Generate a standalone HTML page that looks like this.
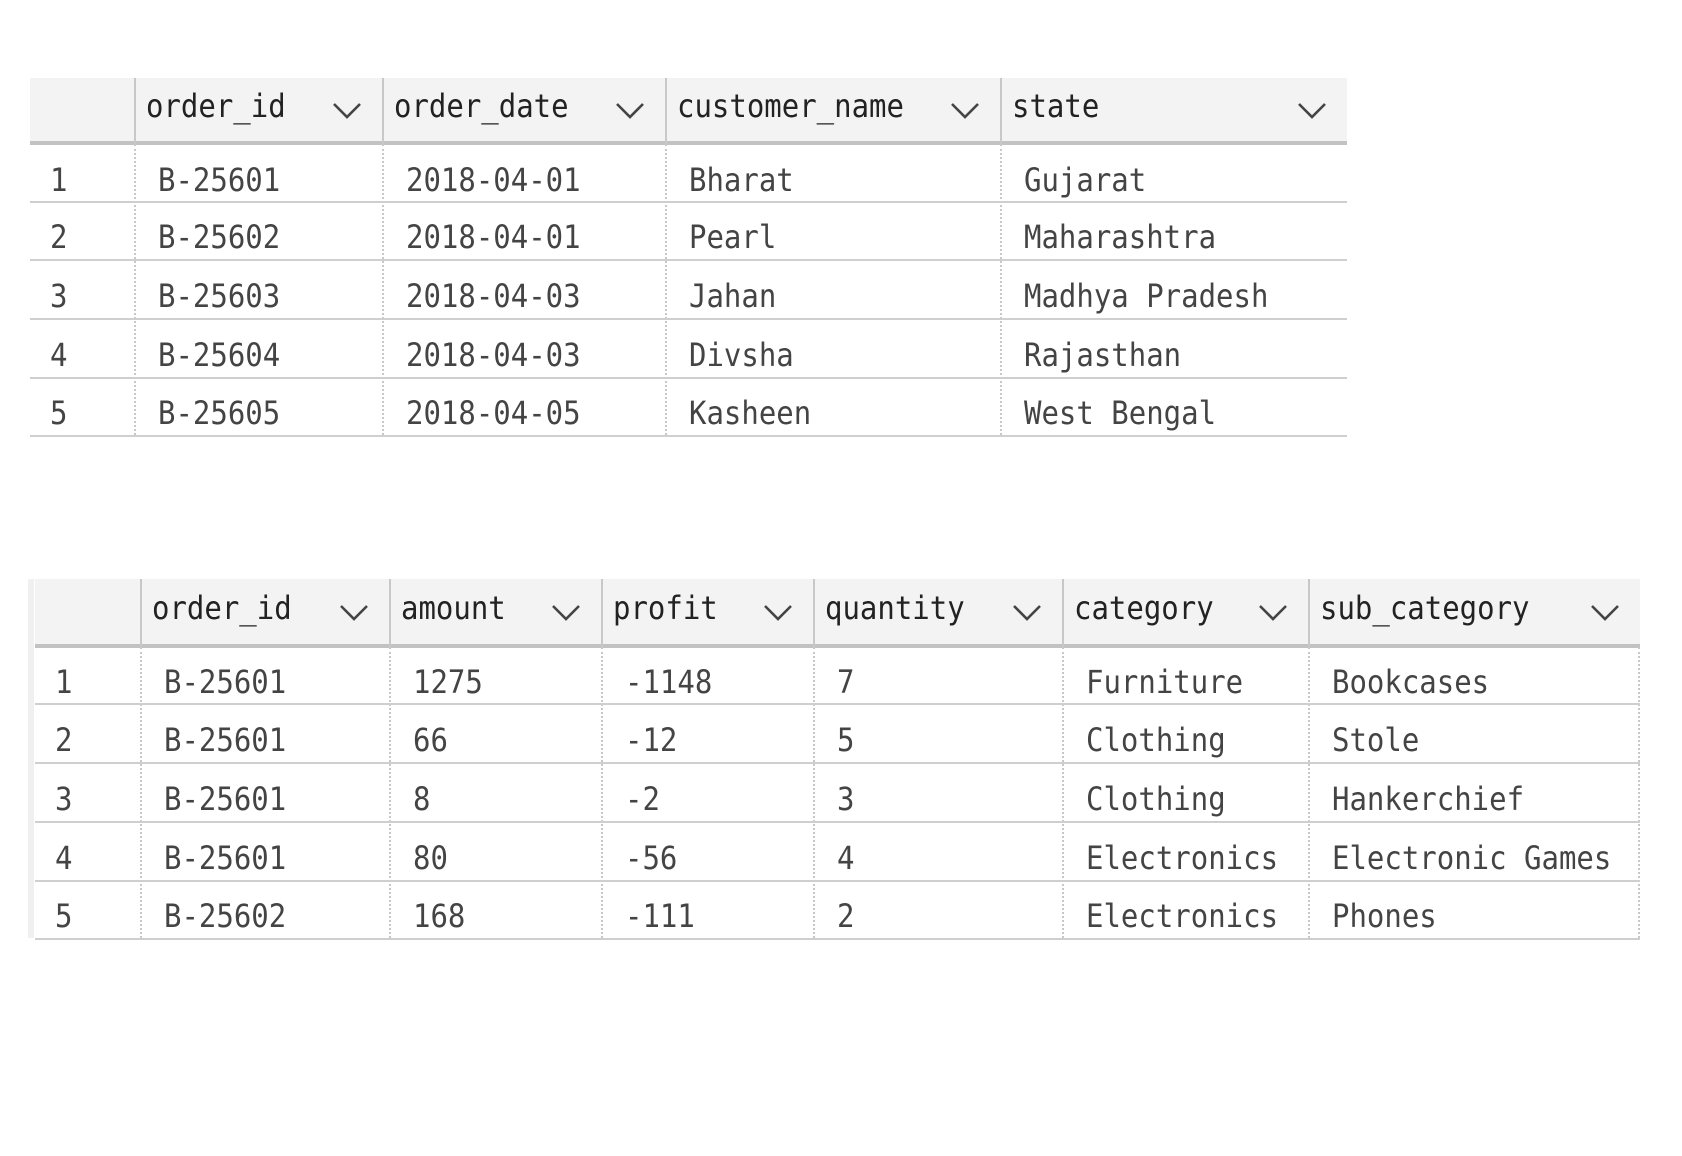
<!DOCTYPE html>
<html><head><meta charset="utf-8"><style>
*{margin:0;padding:0;box-sizing:border-box}
body{width:1682px;height:1156px;background:#fff;position:relative;overflow:hidden;font-family:"DejaVu Sans Mono","Liberation Mono",monospace;font-size:29px;color:#444}
.a{position:absolute}
.hd{background:#f3f3f4}
.hl{background:#c2c2c2}
.rl{background:#cfcfcf;height:2px}
.vd{border-left:2px dotted #c8c8c8;width:0}
.vs{background:#c8c8c8;width:2px}
.t{position:absolute;white-space:pre;line-height:1;transform:scaleY(1.1);transform-origin:0 50%}
.h{color:#222}
svg{position:absolute}
</style></head><body>
<script>
function build(o){
 var r=document.body, h='';
 var L=o.left,R=o.right,T=o.top,HB=o.hb,rows=o.rows,cols=o.cols;
 h+='<div class="a hd" style="left:'+o.hl+'px;top:'+T+'px;width:'+(R-o.hl)+'px;height:'+(HB-T)+'px"></div>';
 h+='<div class="a hl" style="left:'+o.hl+'px;top:'+(HB-3)+'px;width:'+(R-o.hl)+'px;height:4px"></div>';
 if(o.strip)h+='<div class="a" style="left:'+L+'px;top:'+T+'px;width:6px;height:'+(rows[rows.length-1]-T)+'px;background:#f0f0f0"></div>';
 for(var i=0;i<cols.length;i++){
  var x=cols[i];
  h+='<div class="a vs" style="left:'+x+'px;top:'+T+'px;height:'+(HB-T)+'px"></div>';
  h+='<div class="a vd" style="left:'+x+'px;top:'+HB+'px;height:'+(rows[rows.length-1]-HB)+'px"></div>';
 }
 if(o.rightDot)h+='<div class="a vd" style="left:'+(R-2)+'px;top:'+HB+'px;height:'+(rows[rows.length-1]-HB)+'px"></div>';
 var prev=HB;
 for(var j=0;j<rows.length;j++){
  h+='<div class="a rl" style="left:'+o.hl+'px;top:'+rows[j]+'px;width:'+(R-o.hl)+'px"></div>';
  var cy=(prev+rows[j])/2+7;
  h+='<div class="t" style="left:'+(o.hl+20)+'px;top:'+(cy-14)+'px">'+(j+1)+'</div>';
  for(var i=0;i<cols.length;i++){
   h+='<div class="t" style="left:'+(cols[i]+24)+'px;top:'+(cy-14)+'px">'+o.data[j][i]+'</div>';
  }
  prev=rows[j];
 }
 var hy=(T+HB)/2-19;
 for(var i=0;i<cols.length;i++){
  var nx=i+1<cols.length?cols[i+1]:R;
  h+='<div class="t h" style="left:'+(cols[i]+12)+'px;top:'+hy+'px">'+o.heads[i]+'</div>';
  h+='<svg width="30" height="18" style="left:'+(nx-50)+'px;top:'+((T+HB)/2-9)+'px"><path d="M2 2 L15 15 L28 2" fill="none" stroke="#444" stroke-width="2.6"/></svg>';
 }
 r.insertAdjacentHTML('beforeend',h);
}
build({left:30,hl:30,right:1347,top:78,hb:144,rows:[201,259,318,377,435],cols:[134,382,665,1000],
 heads:['order_id','order_date','customer_name','state'],
 data:[['B-25601','2018-04-01','Bharat','Gujarat'],['B-25602','2018-04-01','Pearl','Maharashtra'],['B-25603','2018-04-03','Jahan','Madhya Pradesh'],['B-25604','2018-04-03','Divsha','Rajasthan'],['B-25605','2018-04-05','Kasheen','West Bengal']]});
build({left:28,hl:35,right:1640,top:579,hb:647,strip:true,rightDot:true,rows:[703,762,821,880,938],cols:[140,389,601,813,1062,1308],
 heads:['order_id','amount','profit','quantity','category','sub_category'],
 data:[['B-25601','1275','-1148','7','Furniture','Bookcases'],['B-25601','66','-12','5','Clothing','Stole'],['B-25601','8','-2','3','Clothing','Hankerchief'],['B-25601','80','-56','4','Electronics','Electronic Games'],['B-25602','168','-111','2','Electronics','Phones']]});
</script>
</body></html>
